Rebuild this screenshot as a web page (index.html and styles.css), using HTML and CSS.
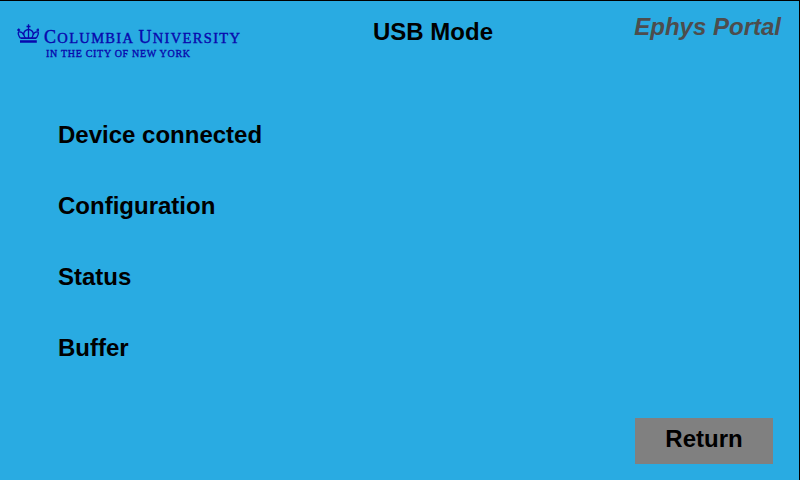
FILE: index.html
```html
<!DOCTYPE html>
<html lang="en">
<head>
<meta charset="utf-8">
<title>USB Mode</title>
<link rel="stylesheet" href="styles.css">
</head>
<body>
<main class="screen">
  <header class="header">
    <div class="brand">
      <svg class="crown" viewBox="0 0 22 20" fill="none" stroke="currentColor" stroke-width="1.3">
        <path d="M11.500 .3v14M9.500 2.500h4M1.700 4.500v3M.2 6h3M21 4.500v3M19.500 6h2.500"/>
        <path d="M3.500 14.300C1.500 12 .7 9 1.700 8c2-.6 4 .5 5.300 3.500M19 14.300c2-2.300 2.800-5.300 2-6.300c-2-.6-4 .5-5.300 3.500M8.500 14.500C5.500 10 6.500 6 11.500 5.300c5 .7 6 4.700 3 9.200"/>
        <path d="M3.500 13.200h15.500v1.800H3.500zM3 16.300h16.800v2.400H3z" fill="currentColor" stroke="none"/>
      </svg>
      <div class="wordmark">
        <svg class="name" viewBox="0 0 200 22"><text x="1" y="17" textLength="196" lengthAdjust="spacing"><tspan class="cap">C</tspan>OLUMBIA <tspan class="cap">U</tspan>NIVERSITY</text></svg>
        <svg class="city" viewBox="0 0 148 13"><text x="0" y="10" textLength="144" lengthAdjust="spacing">IN THE CITY OF NEW YORK</text></svg>
      </div>
    </div>
    <h1 class="title">USB Mode</h1>
    <div class="portal">Ephys Portal</div>
  </header>
  <ul class="fields">
    <li>Device connected</li>
    <li>Configuration</li>
    <li>Status</li>
    <li>Buffer</li>
  </ul>
  <footer class="footer"><button class="return">Return</button></footer>
</main>
</body>
</html>
```
FILE: styles.css
```css
* { box-sizing: border-box; }
body { margin: 0; }
.screen {
  width: 800px; height: 480px;
  display: flex; flex-direction: column;
  background: #29abe2;
  border-top: 1px solid #000; border-right: 1px solid #000;
  font: bold 24px/28px "Liberation Sans", Arial, sans-serif;
  color: #000;
}
.header { height: 98px; display: grid; grid-template-columns: 373px 1fr auto; padding-right: 18px; }
.brand { display: flex; padding: 23px 0 0 17px; color: #0808ad; }
.crown { width: 22px; height: 20px; }
.wordmark { display: flex; flex-direction: column; margin-left: 4px; }
.name { width: 200px; height: 22px; margin-top: 2px; overflow: visible; font: 14.500px "Liberation Serif", serif; fill: #0808ad; stroke: #0808ad; stroke-width: .4px; }
.cap { font-size: 18px; }
.city { width: 148px; height: 13px; margin: -1px 0 0 3px; overflow: visible; font: 10px "Liberation Serif", serif; fill: #0808ad; stroke: #0808ad; stroke-width: .35px; }
.title { margin: 17px 0 0; font-size: inherit; }
.portal { margin-top: 12px; font-style: italic; color: #4d4d4d; }
.fields { list-style: none; margin: 22px 0 0 58px; padding: 0; display: grid; gap: 43px; }
.footer { margin-top: auto; display: flex; justify-content: flex-end; padding: 0 26px 16px 0; }
.return { width: 138px; height: 46px; border: 0; padding: 0 0 4px; background: #808080; color: #000; font: inherit; }
```
